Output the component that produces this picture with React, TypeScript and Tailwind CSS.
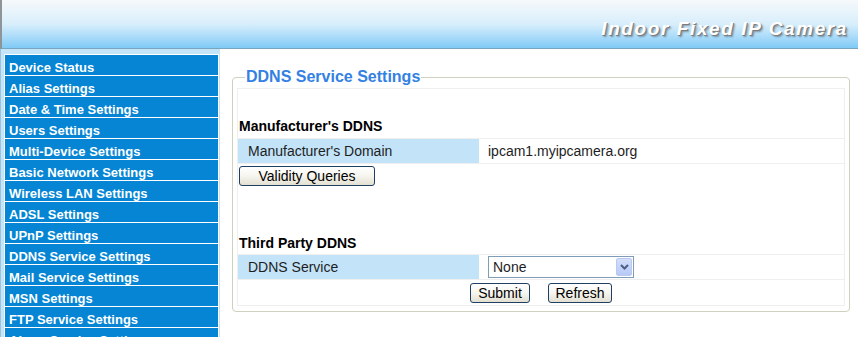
import React from 'react';

const menuItems = [
  'Device Status',
  'Alias Settings',
  'Date & Time Settings',
  'Users Settings',
  'Multi-Device Settings',
  'Basic Network Settings',
  'Wireless LAN Settings',
  'ADSL Settings',
  'UPnP Settings',
  'DDNS Service Settings',
  'Mail Service Settings',
  'MSN Settings',
  'FTP Service Settings',
  'Alarm Service Settings',
];

const XpButton: React.FC<{ label: string; className?: string }> = ({ label, className = '' }) => (
  <button
    type="button"
    className={`h-[20px] rounded-[3px] border border-[#1f3f63] bg-gradient-to-b from-white via-[#f6f5ef] to-[#e3e0d2] text-[14px] leading-[18px] text-black ${className}`}
  >
    {label}
  </button>
);

const App: React.FC = () => {
  return (
    <div className="w-[858px] h-[337px] overflow-hidden bg-white font-['Liberation_Sans',Arial,sans-serif]">
      {/* Banner */}
      <div className="h-[49px] border-l-2 border-b border-l-[#8e9498] border-b-[#78a5bf] bg-gradient-to-b from-[#f6f9fb] via-[#d8eefb] to-[#7fcaf7] flex justify-end pr-[10px] pt-[19px]">
        <span className="text-[19px] leading-[20px] font-bold italic tracking-[1.6px] text-white [text-shadow:1px_1px_0_#7c7c7c,2px_2px_2px_rgba(0,0,0,0.35)]">
          Indoor Fixed IP Camera
        </span>
      </div>

      <div className="flex h-[288px]">
        {/* Left menu */}
        <div className="w-[220px] shrink-0 bg-[#c4e4f8] border-l border-l-[#9cc3dc] pl-[3px] pt-[5px]">
          <div className="w-[215px] border-t border-x border-white">
            {menuItems.map((item) => (
              <div
                key={item}
                className="h-[21px] border-b border-white bg-[#0585d3] pl-[4px] pt-[3px] text-[13px] leading-[19px] font-bold text-white whitespace-nowrap overflow-hidden"
              >
                {item}
              </div>
            ))}
          </div>
        </div>

        {/* Content */}
        <div className="flex-1 pl-[12px] pr-[8px] pt-[19px]">
          <fieldset className="rounded-[4px] border border-[#d0d0bf] px-[4px] pb-[5px]">
            <legend className="ml-[8px] px-[1px] text-[16px] leading-[18px] font-bold text-[#3381e2]">
              DDNS Service Settings
            </legend>
            <div className="mt-[2px] border border-[#efefef] flex flex-col text-[14px] text-[#1e1e1e]">
              <div className="h-[49px] flex items-end pb-[4px] pl-[1px] text-[14px] leading-[16px] font-bold text-black">
                Manufacturer's DDNS
              </div>
              <div className="flex border-y border-[#efefef]">
                <div className="w-[241px] h-[24px] bg-[#c3e3f8] pl-[10px] leading-[24px]">
                  Manufacturer's Domain
                </div>
                <div className="pl-[9px] leading-[24px]">ipcam1.myipcamera.org</div>
              </div>
              <div className="pt-[2px] pl-[1px]">
                <XpButton label="Validity Queries" className="w-[136px]" />
              </div>
              <div className="h-[67px] flex items-end pb-[3px] pl-[1px] text-[14px] leading-[16px] font-bold text-black">
                Third Party DDNS
              </div>
              <div className="flex border-y border-[#efefef]">
                <div className="w-[241px] h-[24px] bg-[#c3e3f8] pl-[10px] leading-[24px]">
                  DDNS Service
                </div>
                <div className="pl-[9px] pt-[1px]">
                  <div className="w-[146px] h-[22px] border border-[#7f9db9] bg-white flex items-center justify-between">
                    <span className="pl-[4px] leading-[20px]">None</span>
                    <span className="mr-[1px] w-[16px] h-[18px] rounded-[2px] border border-[#b9c9f2] bg-gradient-to-b from-[#d3defc] to-[#b7c9f6] flex items-center justify-center">
                      <svg width="9" height="6" viewBox="0 0 9 6">
                        <polyline points="1,1 4.5,4.5 8,1" fill="none" stroke="#4b5f85" strokeWidth="2" />
                      </svg>
                    </span>
                  </div>
                </div>
              </div>
              <div className="h-[25px] pt-[3px] flex justify-center gap-[18px]">
                <XpButton label="Submit" className="w-[60px]" />
                <XpButton label="Refresh" className="w-[64px]" />
              </div>
            </div>
          </fieldset>
        </div>
      </div>
    </div>
  );
};

export default App;
